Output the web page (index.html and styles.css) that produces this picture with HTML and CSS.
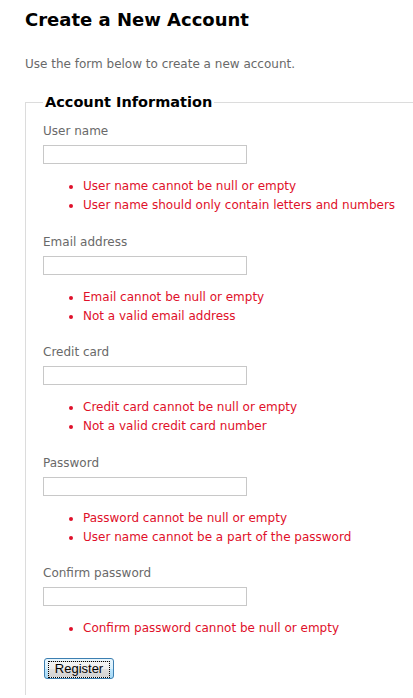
FILE: index.html
```html
<!DOCTYPE html>
<html>
<head>
<meta charset="utf-8">
<link rel="stylesheet" href="styles.css">
</head>
<body>
<div class="page">
  <h2 class="title">Create a New Account</h2>
  <p class="intro">Use the form below to create a new account.</p>
  <form class="form">
    <fieldset class="fieldset">
      <legend class="legend">Account Information</legend>

      <div class="group">
        <div class="label">User name</div>
        <input class="field" type="text">
        <ul class="errors">
          <li>User name cannot be null or empty</li>
          <li>User name should only contain letters and numbers</li>
        </ul>
      </div>

      <div class="group">
        <div class="label">Email address</div>
        <input class="field" type="text">
        <ul class="errors">
          <li>Email cannot be null or empty</li>
          <li>Not a valid email address</li>
        </ul>
      </div>

      <div class="group">
        <div class="label">Credit card</div>
        <input class="field" type="text">
        <ul class="errors">
          <li>Credit card cannot be null or empty</li>
          <li>Not a valid credit card number</li>
        </ul>
      </div>

      <div class="group">
        <div class="label">Password</div>
        <input class="field" type="password">
        <ul class="errors">
          <li>Password cannot be null or empty</li>
          <li>User name cannot be a part of the password</li>
        </ul>
      </div>

      <div class="group">
        <div class="label">Confirm password</div>
        <input class="field" type="password">
        <ul class="errors">
          <li>Confirm password cannot be null or empty</li>
        </ul>
      </div>

      <div class="actions">
        <button class="button" type="button"><span class="button-inner">Register</span></button>
      </div>
    </fieldset>
  </form>
</div>
</body>
</html>
```

FILE: styles.css
```css
html, body {
  margin: 0;
  padding: 0;
  background: #ffffff;
}

body {
  font-family: "DejaVu Sans", Verdana, sans-serif;
  color: #696969;
}

.page {
  padding-left: 25px;
}

.title {
  margin: 0;
  padding-top: 9px;
  font-size: 18px;
  line-height: 22px;
  font-weight: bold;
  color: #000000;
}

.intro {
  margin: 25px 0 0 0;
  font-size: 12px;
  line-height: 16px;
  color: #696969;
}

.form {
  margin: 0;
}

.fieldset {
  margin: 21px 0 0 0;
  padding: 12px 17px 16px 17px;
  border: 1px solid #dcdcdc;
  border-right: none;
  border-bottom: none;
  min-width: 0;
}

.legend {
  padding: 0 2px;
  font-size: 14.5px;
  line-height: 18px;
  font-weight: bold;
  color: #000000;
}

.group {
  margin-bottom: 18.5px;
}

.label {
  font-size: 12px;
  line-height: 16px;
  color: #696969;
}

.field {
  display: block;
  margin: 6px 0 0 0;
  width: 204px;
  height: 19px;
  box-sizing: border-box;
  border: 1px solid #c8c8c8;
  padding: 0 2px;
  background: #ffffff;
  font-family: "DejaVu Sans", sans-serif;
  font-size: 12px;
}

.errors {
  margin: 13px 0 0 0;
  padding-left: 40px;
  font-size: 12px;
  line-height: 19px;
  color: #e0102a;
}

.actions {
  padding-left: 1px;
  padding-top: 1px;
}

.button {
  display: block;
  width: 70px;
  height: 21px;
  padding: 2px 3px;
  box-sizing: border-box;
  border: 1px solid #3c7fb1;
  border-radius: 3px;
  background: linear-gradient(#eaf6fd 0%, #d9f0fc 50%, #bee6fd 50%, #a7d9f5 100%);
  font-family: "Liberation Sans", Arial, sans-serif;
  font-size: 13px;
  color: #000000;
  cursor: default;
}

.button-inner {
  display: block;
  height: 15px;
  line-height: 13px;
  border: 1px dotted #000000;
  background: linear-gradient(#f4f4f4 0%, #ececec 50%, #dedede 50%, #d2d2d2 100%);
}
```
